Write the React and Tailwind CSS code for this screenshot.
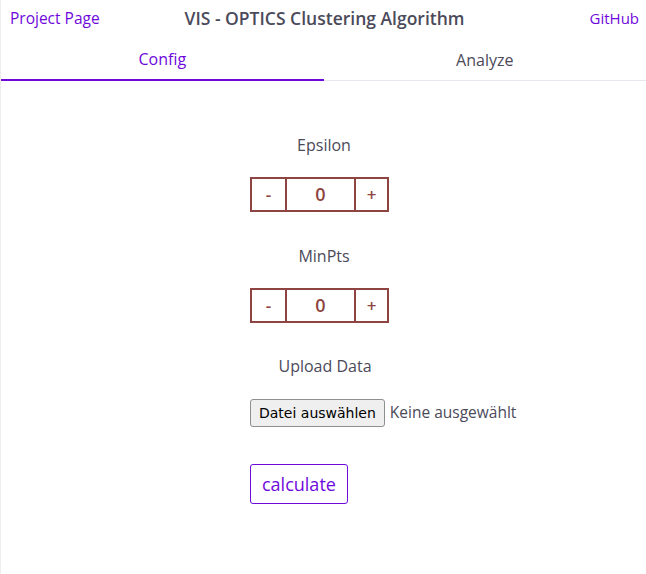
import React, { useState } from 'react';

const font = "font-['Open_Sans','Noto_Sans',sans-serif]";

function Stepper({ value, onChange }) {
  return (
    <div className="flex h-[35px] w-[139px] border-2 border-[#8e4440] text-[#8e4440]">
      <button
        onClick={() => onChange(value - 1)}
        className="w-[35px] border-r-2 border-[#8e4440] text-[17px] font-semibold leading-none"
      >
        -
      </button>
      <div className="flex flex-1 items-center justify-center text-[18px] font-semibold">{value}</div>
      <button
        onClick={() => onChange(value + 1)}
        className="w-[33px] border-l-2 border-[#8e4440] text-[17px] font-semibold leading-none"
      >
        +
      </button>
    </div>
  );
}

export default function App() {
  const [activeTab, setActiveTab] = useState('config');
  const [epsilon, setEpsilon] = useState(0);
  const [minPts, setMinPts] = useState(0);

  return (
    <div className={`min-h-[574px] border-l border-[#eeeeee] bg-white ${font}`}>
      {/* Header */}
      <header className="flex h-[37px] items-center pl-[9px] pr-[7px] text-[15px]">
        <div className="flex-1">
          <a className="text-[15.5px] text-[#7008dc]">Project Page</a>
        </div>
        <h1 className="shrink-0 text-[17.5px] font-semibold text-[#4b4a5a]">VIS - OPTICS Clustering Algorithm</h1>
        <div className="flex flex-1 justify-end">
          <a className="text-[#7008dc]">GitHub</a>
        </div>
      </header>

      {/* Tabs */}
      <nav className="flex h-[44px] border-b border-[#e8e6ee]">
        {[
          { id: 'config', name: 'Config' },
          { id: 'analyze', name: 'Analyze' },
        ].map((tab) => (
          <button
            key={tab.id}
            onClick={() => setActiveTab(tab.id)}
            className={`flex-1 pt-[2px] text-[16px] ${
              activeTab === tab.id
                ? '-mb-px border-b-2 border-[#7008dc] text-[#7008dc]'
                : 'text-[#4b4a5a]'
            }`}
          >
            {tab.name}
          </button>
        ))}
      </nav>

      {/* Config form */}
      {activeTab === 'config' && (
        <div className="flex flex-col pl-[249px] pt-[53px] text-[16px] text-[#4b4a5a]">
          <label className="w-[148px] text-center leading-[22px]">Epsilon</label>
          <div className="mt-[21px]">
            <Stepper value={epsilon} onChange={setEpsilon} />
          </div>

          <label className="mt-[33px] w-[148px] text-center leading-[22px]">MinPts</label>
          <div className="mt-[21px]">
            <Stepper value={minPts} onChange={setMinPts} />
          </div>

          <label className="mt-[32px] w-[150px] text-center leading-[22px]">Upload Data</label>
          <div className="mt-[22px] flex items-center gap-[5px]">
            <button className="h-[28px] rounded-[3px] border border-[#8f8f8f] bg-[#efefef] px-[8px] font-['DejaVu_Sans',sans-serif] text-[14px] text-black">
              Datei auswählen
            </button>
            <span className="text-[15.5px]">Keine ausgewählt</span>
          </div>

          <div className="mt-[37px]">
            <button className="h-[40px] rounded-[3px] border border-[#7008dc] px-[11px] text-[18px] text-[#7008dc]">
              calculate
            </button>
          </div>
        </div>
      )}
    </div>
  );
}
